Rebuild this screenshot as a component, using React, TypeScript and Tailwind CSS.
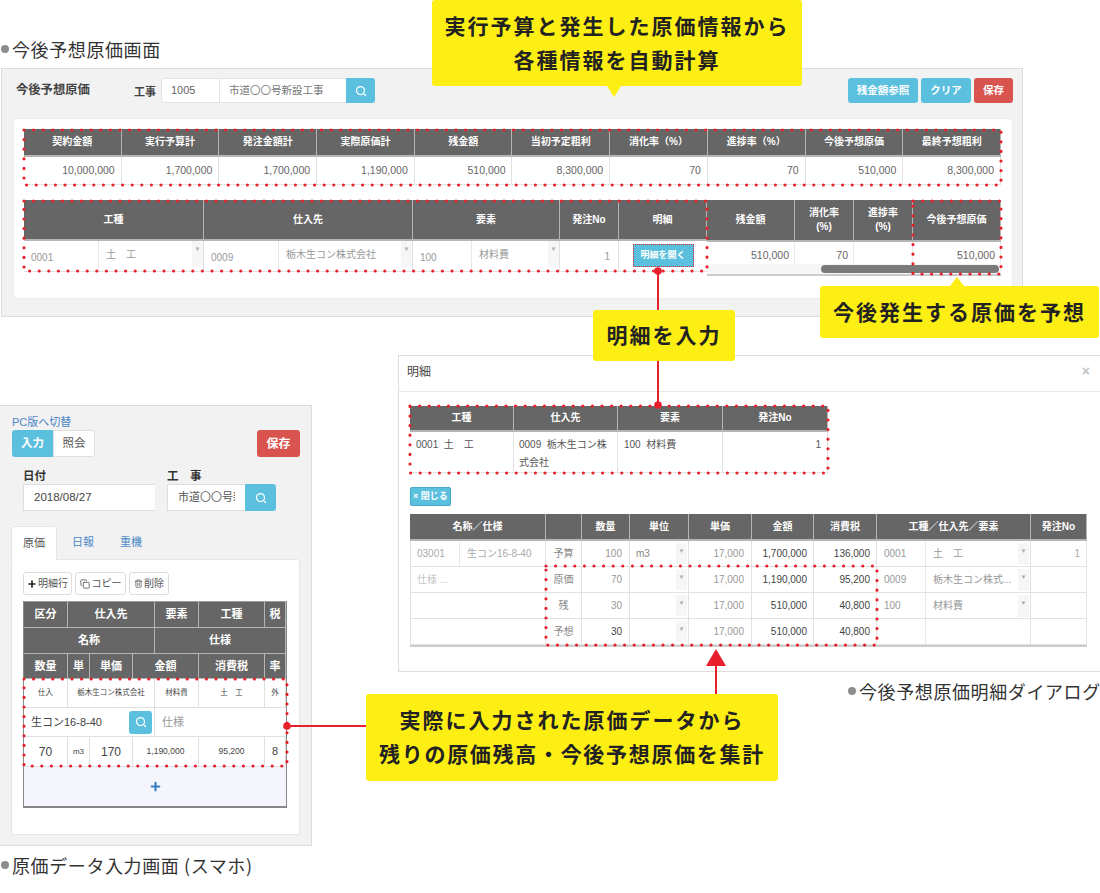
import { Search, Plus, Copy, Trash2 } from "lucide-react";

const sans = "font-['Liberation_Sans','Noto_Sans_CJK_JP',sans-serif]";
const th = "flex items-center justify-center text-center bg-[#666666] text-white font-bold text-[10px] leading-[14px] border-r border-b-2 border-[#b5b5b5]";

function Caret() {
  return <span className="flex w-[11px] h-full justify-center bg-[#f6f6f6] text-[#aaaaaa] text-[6px] pt-[4px] shrink-0">▼</span>;
}

function Sel({ code, name, w, tone = "text-[#999999]" }: { code: string; name: string; w: string; tone?: string }) {
  return (
    <div className={`flex items-stretch h-full text-[10px] ${tone} border-r border-b border-[#e2e2e2]`}>
      <div className={`${w} flex items-center pl-[7px] pt-[2px] border-r border-[#e8e8e8] shrink-0`}>{code}</div>
      <div className="flex flex-1 min-w-0 items-center pl-[7px] whitespace-nowrap">
        <span className="flex-1 min-w-0 pb-[4px]">{name}</span>
        <span className="h-[26px] self-start"><Caret /></span>
      </div>
    </div>
  );
}

function Label({ text, cls }: { text: string; cls: string }) {
  return (
    <div className={`absolute flex items-center gap-[3px] text-[18px] leading-[24px] text-[#333333] tracking-[0.6px] whitespace-nowrap font-['Noto_Sans_CJK_JP',sans-serif] ${cls}`}>
      <span className="w-[8px] h-[8px] rounded-full bg-[#8d8d8d]" />
      {text}
    </div>
  );
}

const sumHead = ["契約金額", "実行予算計", "発注金額計", "実際原価計", "残金額", "当初予定粗利", "消化率（%）", "進捗率（%）", "今後予想原価", "最終予想粗利"];
const sumVal = ["10,000,000", "1,700,000", "1,700,000", "1,190,000", "510,000", "8,300,000", "70", "70", "510,000", "8,300,000"];

function MainPanel() {
  return (
    <div className={`absolute left-[1px] top-[68px] w-[1022px] h-[249px] bg-[#f2f2f2] border border-[#dcdcdc] ${sans}`}>
      <div className="flex items-center h-[25px] mt-[9px] pl-[14px] pr-[9px]">
        <div className="w-[118px] text-[12.3px] font-bold text-[#444444]">今後予想原価</div>
        <div className="w-[27px] text-[11px] font-bold text-[#444444] pt-[3px]">工事</div>
        <div className="flex h-[25px] text-[11px] text-[#666666]">
          <div className="w-[59px] flex items-center pl-[9px] bg-white border border-[#e3e3e3] rounded-l-[3px]">1005</div>
          <div className="w-[126px] flex items-center pl-[9px] bg-white border-y border-[#e3e3e3] text-[10.5px] text-[#777777]">市道〇〇号新設工事</div>
          <div className="w-[29px] flex items-center justify-center bg-[#5bc0de] rounded-r-[3px] text-white"><Search size={12} strokeWidth={2.5} /></div>
        </div>
        <div className="ml-auto flex gap-[3px] text-[10.5px] font-bold text-white">
          <div className="w-[70px] h-[25px] flex items-center justify-center bg-[#5bc0de] rounded-[3px]">残金額参照</div>
          <div className="w-[50px] h-[25px] flex items-center justify-center bg-[#5bc0de] rounded-[3px]">クリア</div>
          <div className="w-[39px] h-[25px] flex items-center justify-center bg-[#d9534f] rounded-[3px]">保存</div>
        </div>
      </div>
      <div className="mt-[15px] ml-[11px] w-[1000px] h-[181px] bg-white rounded-[3px] border border-[#ececec] pl-[10px] pt-[10px]">
        <div className="grid grid-cols-10 w-[977px]">
          {sumHead.map((h) => <div key={h} className={`${th} h-[28px]`}>{h}</div>)}
          {sumVal.map((v, i) => (
            <div key={i} className="h-[28px] flex items-center justify-end pr-[6px] text-[10.5px] text-[#666666] border-r border-b border-[#e2e2e2]">{v}</div>
          ))}
        </div>
        <div className="flex mt-[15px] w-[977px]">
          <div className="w-[683px] grid grid-cols-[180px_209px_147px_59px_88px] grid-rows-[41px_31px]">
            {["工種", "仕入先", "要素", "発注No", "明細"].map((h) => <div key={h} className={th}>{h}</div>)}
            <Sel code="0001" name="土　工" w="w-[75px]" />
            <Sel code="0009" name="栃木生コン株式会社" w="w-[75px]" />
            <Sel code="100" name="材料費" w="w-[59px]" />
            <div className="flex items-center justify-end pr-[8px] text-[10px] text-[#999999] border-r border-b border-[#e2e2e2]">1</div>
            <div className="flex items-start justify-center pt-[3px] border-b border-[#e2e2e2]">
              <div className="w-[61px] h-[23px] flex items-center justify-center bg-[#5bc0de] text-white text-[9px] font-bold border border-dotted border-[#e8202c]">明細を開く</div>
            </div>
          </div>
          <div className="relative w-[294px] grid grid-cols-[88px_59px_59px_88px] grid-rows-[42px_32px] border-b-2 border-[#cccccc]">
            {["残金額", "消化率\n(%)", "進捗率\n(%)", "今後予想原価"].map((h) => <div key={h} className={`${th} whitespace-pre-line`}>{h}</div>)}
            {["510,000", "70", "", "510,000"].map((v, i) => (
              <div key={i} className="flex justify-end pt-[6px] pr-[5px] text-[10.5px] text-[#666666] border-r border-[#e8e8e8]">{v}</div>
            ))}
            <div className="absolute left-0 right-0 bottom-0 h-[10px] bg-[#f4f4f4]/80" />
            <div className="absolute right-[2px] bottom-[1px] w-[178px] h-[8px] rounded-full bg-[#7a7a7a]" />
          </div>
        </div>
      </div>
    </div>
  );
}

const colors = "border-r border-b border-[#e2e2e2]";

function DialogRow({ name, kind, qty, qtyDark, unit, total, tax, a, b, no }: {
  name: React.ReactNode; kind: string; qty: string; qtyDark?: boolean; unit: string; total: string; tax: string; a: string; b: string; no: string;
}) {
  return (
    <>
      <div className={`${colors} border-l h-[26px] flex items-stretch text-[10px] text-[#aaaaaa]`}>{name}</div>
      <div className={`${colors} flex items-center justify-center text-[10px] text-[#888888]`}>{kind}</div>
      <div className={`${colors} flex items-center justify-end pr-[7px] text-[10px] ${qtyDark ? "text-[#444444]" : "text-[#999999]"}`}>{qty}</div>
      <div className={`${colors} flex items-stretch text-[10px] text-[#888888] pl-[6px]`}>
        <span className="flex-1 flex items-center">{unit}</span>
        <span className="my-[2px] mr-[1px]"><Caret /></span>
      </div>
      <div className={`${colors} flex items-center justify-end pr-[7px] text-[10px] text-[#999999]`}>17,000</div>
      <div className={`${colors} flex items-center justify-end pr-[6px] text-[10px] text-[#444444]`}>{total}</div>
      <div className={`${colors} flex items-center justify-end pr-[6px] text-[10px] text-[#444444]`}>{tax}</div>
      <div className={`${colors} flex items-stretch text-[10px] text-[#999999]`}>
        <div className="w-[49px] flex items-center pl-[7px] border-r border-[#e8e8e8]">{a}</div>
        {b !== "-" ? (
          <div className="flex flex-1 min-w-0 items-center pl-[7px] whitespace-nowrap">
            <span className="flex-1 min-w-0">{b}</span>
            <span className="h-[22px] mr-[1px]"><Caret /></span>
          </div>
        ) : null}
      </div>
      <div className={`${colors} flex items-center justify-end pr-[6px] text-[10px] text-[#aaaaaa]`}>{no}</div>
    </>
  );
}

function Dialog() {
  return (
    <div className={`absolute left-[398px] top-[355px] w-[703px] h-[317px] bg-white border border-[#dddddd] ${sans}`}>
      <div className="flex items-center justify-between h-[36px] pl-[8px] pr-[10px] pb-[4px] border-b border-[#e8e8e8] text-[12px] text-[#444444]">
        <span>明細</span>
        <span className="text-[14px] font-bold text-[#c4c4c4]">×</span>
      </div>
      <div className="pl-[11px] pt-[14px]">
        <div className="grid grid-cols-[104px_104px_105px_105px] w-[418px] grid-rows-[26px_41px]">
          {["工種", "仕入先", "要素", "発注No"].map((h) => <div key={h} className={th}>{h}</div>)}
          <div className={`${colors} text-[10px] leading-[18px] text-[#555555] pl-[6px] pt-[4px]`}>0001 &nbsp;土　工</div>
          <div className={`${colors} text-[10px] leading-[18px] text-[#555555] pl-[5px] pt-[4px]`}>0009 &nbsp;栃木生コン株<br />式会社</div>
          <div className={`${colors} text-[10px] leading-[18px] text-[#555555] pl-[6px] pt-[4px]`}>100 &nbsp;材料費</div>
          <div className={`${colors} text-[10px] leading-[18px] text-[#555555] pr-[6px] pt-[4px] text-right`}>1</div>
        </div>
        <div className="mt-[14px] w-[41px] h-[19px] flex items-center justify-center bg-[#5bc0de] border border-[#46a8c6] rounded-[2px] text-white text-[9px] font-bold">× 閉じる</div>
        <div className="mt-[8px] grid grid-cols-[136px_36px_48px_59px_63px_62px_63px_154px_56px] w-[677px] border-b-2 border-[#cccccc]">
          {["名称／仕様", "", "数量", "単位", "単価", "金額", "消費税", "工種／仕入先／要素", "発注No"].map((h, i) => (
            <div key={i} className={`${th} h-[27px]`}>{h}</div>
          ))}
          <DialogRow
            name={<><span className="w-[49px] flex items-center pl-[6px] border-r border-[#e8e8e8]">03001</span><span className="flex items-center pl-[7px]">生コン16-8-40</span></>}
            kind="予算" qty="100" unit="m3" total="1,700,000" tax="136,000" a="0001" b="土　工" no="1" />
          <DialogRow name={<span className="flex items-center pl-[6px] text-[#c4c4c4]">仕様 ...</span>} kind="原価" qty="70" unit="" total="1,190,000" tax="95,200" a="0009" b="栃木生コン株式..." no="" />
          <DialogRow name="" kind="残" qty="30" unit="" total="510,000" tax="40,800" a="100" b="材料費" no="" />
          <DialogRow name="" kind="予想" qty="30" qtyDark unit="" total="510,000" tax="40,800" a="" b="-" no="" />
        </div>
      </div>
    </div>
  );
}

const mh = "flex items-center justify-center bg-[#666666] text-white font-bold text-[11px] border-r border-b border-[#b5b5b5]";
const md = "flex items-center justify-center text-[#444444] border-r border-b border-[#e0e0e0]";

function Mobile() {
  return (
    <div className={`absolute left-0 top-[405px] w-[312px] h-[441px] bg-[#f2f2f2] border border-l-0 border-[#dcdcdc] ${sans}`}>
      <div className="pl-[12px] pr-[11px] pt-[8px]">
        <div className="h-[16px] text-[11px] leading-[16px] text-[#4a86c5]">PC版へ切替</div>
        <div className="flex justify-between h-[27px]">
          <div className="flex text-[11.5px]">
            <div className="w-[41px] flex items-center justify-center bg-[#5bc0de] text-white font-bold rounded-l-[3px]">入力</div>
            <div className="w-[42px] flex items-center justify-center bg-white text-[#555555] border border-[#e0e0e0] rounded-r-[3px]">照会</div>
          </div>
          <div className="w-[43px] flex items-center justify-center bg-[#d9534f] text-white text-[12px] font-bold rounded-[3px]">保存</div>
        </div>
      </div>
      <div className="flex pl-[23px] mt-[11px]">
        <div className="w-[144px]">
          <div className="h-[16px] text-[11.5px] leading-[16px] font-bold text-[#333333]">日付</div>
          <div className="w-[132px] h-[27px] flex items-center pl-[10px] bg-white border-y border-l border-[#dddddd] text-[11.5px] text-[#444444]">2018/08/27</div>
        </div>
        <div>
          <div className="h-[16px] text-[11.5px] leading-[16px] font-bold text-[#333333]">工　事</div>
          <div className="flex h-[27px]">
            <div className="w-[78px] flex items-center pl-[10px] pr-[10px] bg-white border-y border-l border-[#dddddd] text-[11px] text-[#555555] whitespace-nowrap"><span className="overflow-hidden">市道〇〇号新設工事</span></div>
            <div className="w-[31px] flex items-center justify-center bg-[#5bc0de] text-white rounded-r-[3px]"><Search size={12} strokeWidth={2.5} /></div>
          </div>
        </div>
      </div>
      <div className="flex pl-[11px] mt-[15px] h-[33px] text-[11px]">
        <div className="w-[46px] flex items-center justify-center bg-white border-x border-t border-[#e6e6e6] rounded-t-[3px] text-[#555555] relative z-10 -mb-[1px]">原価</div>
        <div className="w-[52px] flex items-center justify-center text-[#4a86c5]">日報</div>
        <div className="w-[44px] flex items-center justify-center text-[#4a86c5]">重機</div>
      </div>
      <div className="ml-[11px] w-[289px] h-[276px] bg-white border border-[#e6e6e6] rounded-[3px] pl-[11px] pt-[12px]">
        <div className="flex gap-[3px] h-[23px] text-[10px] text-[#555555]">
          <div className="w-[49px] flex items-center justify-center gap-[1px] border border-[#dddddd] rounded-[3px]"><Plus size={10} strokeWidth={4} className="text-[#222222]" />明細行</div>
          <div className="w-[51px] flex items-center justify-center gap-[2px] border border-[#dddddd] rounded-[3px]"><Copy size={10} />コピー</div>
          <div className="w-[40px] flex items-center justify-center gap-[1px] border border-[#dddddd] rounded-[3px]"><Trash2 size={9} />削除</div>
        </div>
        <div className="mt-[6px] w-[264px] border-x border-b-2 border-[#888888] grid grid-cols-[44px_22px_43px_22px_44px_66px_21px]">
          <div className={`${mh} h-[27px] border-t border-t-[#999999]`}>区分</div>
          <div className={`${mh} col-span-3 border-t border-t-[#999999]`}>仕入先</div>
          <div className={`${mh} border-t border-t-[#999999]`}>要素</div>
          <div className={`${mh} border-t border-t-[#999999]`}>工種</div>
          <div className={`${mh} border-t border-t-[#999999]`}>税</div>
          <div className={`${mh} col-span-4 h-[26px]`}>名称</div>
          <div className={`${mh} col-span-3`}>仕様</div>
          <div className={`${mh} h-[25px]`}>数量</div>
          <div className={mh}>単</div>
          <div className={mh}>単価</div>
          <div className={`${mh} col-span-2`}>金額</div>
          <div className={mh}>消費税</div>
          <div className={mh}>率</div>

          <div className={`${md} h-[29px] text-[7.5px]`}>仕入</div>
          <div className={`${md} col-span-3 text-[7.5px]`}>栃木生コン株式会社</div>
          <div className={`${md} text-[7.5px]`}>材料費</div>
          <div className={`${md} text-[7.5px]`}>土　工</div>
          <div className={`${md} text-[7.5px]`}>外</div>

          <div className="col-span-4 h-[29px] flex items-center justify-between pl-[7px] pr-[2px] text-[11px] text-[#444444] border-r border-b border-[#e0e0e0]">
            生コン16-8-40
            <span className="w-[23px] h-[23px] flex items-center justify-center bg-[#5bc0de] text-white rounded-[3px]"><Search size={12} strokeWidth={2.5} /></span>
          </div>
          <div className="col-span-3 flex items-center pl-[7px] text-[11px] text-[#999999] border-b border-[#e0e0e0]">仕様</div>

          <div className={`${md} h-[30px] text-[12px]`}>70</div>
          <div className={`${md} text-[8px]`}>m3</div>
          <div className={`${md} text-[12px]`}>170</div>
          <div className={`${md} col-span-2 text-[8.5px]`}>1,190,000</div>
          <div className={`${md} text-[8.5px]`}>95,200</div>
          <div className={`${md} text-[11px]`}>8</div>

          <div className="col-span-7 h-[39px] flex items-center justify-center bg-[#f5f6fd] text-[#3a7fc2]"><Plus size={13} strokeWidth={4} /></div>
        </div>
      </div>
    </div>
  );
}

function Marks() {
  const dot = { fill: "none", stroke: "#e8202c", strokeWidth: 3.2, strokeLinecap: "round" as const, strokeDasharray: "0 9.6" };
  return (
    <svg className="absolute left-0 top-0 w-[1100px] h-[893px] pointer-events-none" viewBox="0 0 1100 893">
      <rect x="24" y="130" width="977" height="55" {...dot} />
      <rect x="24" y="201" width="683" height="70" {...dot} />
      <rect x="913" y="201" width="88" height="73" {...dot} />
      <rect x="410" y="406" width="418" height="67" {...dot} />
      <rect x="546" y="566" width="331" height="79" {...dot} />
      <rect x="24" y="679" width="263" height="87" {...dot} />
      <g stroke="#e8202c" strokeWidth="2" fill="#e8202c">
        <line x1="658" y1="271" x2="658" y2="312" />
        <line x1="658" y1="360" x2="658" y2="405" />
        <line x1="716" y1="664" x2="716" y2="696" />
        <line x1="287" y1="726" x2="368" y2="726" />
      </g>
      <g fill="#e8202c">
        <circle cx="658" cy="271" r="3.8" />
        <circle cx="658" cy="405" r="3.8" />
        <circle cx="287" cy="726" r="3.8" />
        <polygon points="716,649 706,666 726,666" />
      </g>
    </svg>
  );
}

const call = "absolute flex flex-col items-center justify-center pb-[3px] bg-[#fdee14] rounded-[3px] text-[#222222] font-bold text-[21px] leading-[34px] tracking-[2px] whitespace-nowrap font-['Noto_Sans_CJK_JP',sans-serif]";

export default function App() {
  return (
    <div className="relative w-[1100px] h-[893px] bg-white overflow-hidden">
      <Label text="今後予想原価画面" cls="left-[1px] top-[37px]" />
      <Label text="今後予想原価明細ダイアログ" cls="left-[848px] top-[679px]" />
      <Label text="原価データ入力画面 (スマホ)" cls="left-[1px] top-[853px]" />
      <MainPanel />
      <Dialog />
      <Mobile />
      <Marks />
      <div className={`${call} left-[432px] top-0 w-[370px] h-[86px]`}>
        <span>実行予算と発生した原価情報から</span>
        <span>各種情報を自動計算</span>
        <span className="absolute left-[175px] top-[86px] border-x-[7px] border-x-transparent border-t-[11px] border-t-[#fdee14]" />
      </div>
      <div className={`${call} left-[820px] top-[286px] w-[279px] h-[52px]`}>
        今後発生する原価を予想
        <span className="absolute left-[130px] -top-[9px] border-x-[7px] border-x-transparent border-b-[9px] border-b-[#fdee14]" />
      </div>
      <div className={`${call} left-[593px] top-[310px] w-[142px] h-[51px]`}>明細を入力</div>
      <div className={`${call} left-[366px] top-[694px] w-[412px] h-[87px]`}>
        <span>実際に入力された原価データから</span>
        <span className="tracking-[1.7px]">残りの原価残高・今後予想原価を集計</span>
      </div>
    </div>
  );
}
